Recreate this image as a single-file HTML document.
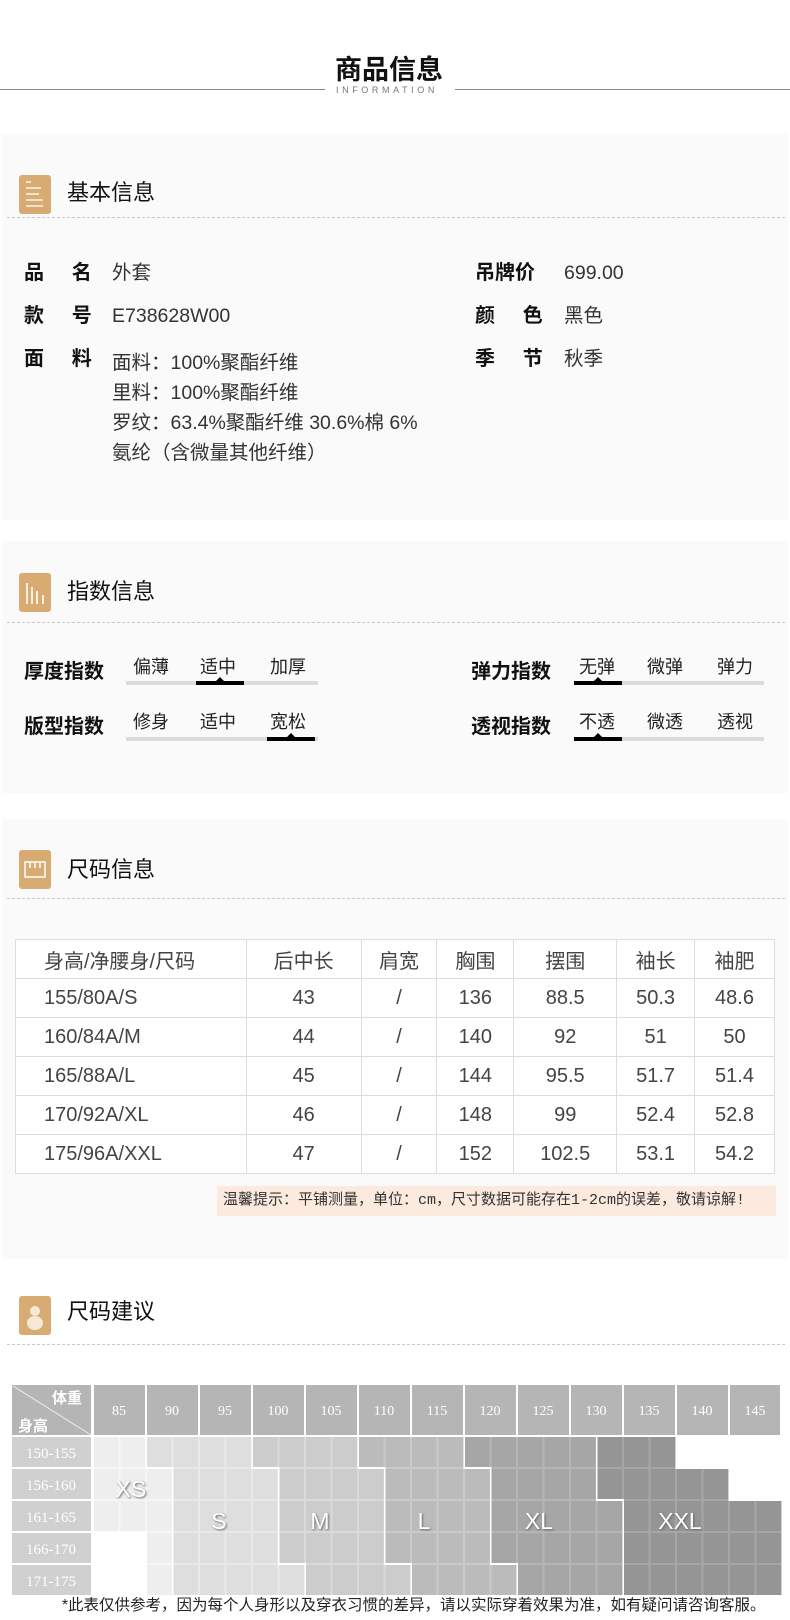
<!DOCTYPE html>
<html><head><meta charset="utf-8"><style>
*{margin:0;padding:0;box-sizing:border-box}
body{width:790px;height:1620px;background:#fff;position:relative;overflow:hidden;font-family:"Liberation Sans","Noto Sans CJK SC",sans-serif;color:#222}
.a{position:absolute;white-space:nowrap}
.panel{position:absolute;left:2px;width:786px;background:#fafafa}
.ic{position:absolute;left:19px;width:32px;height:39px;background:#d8ab72;border-radius:3px}
.st{position:absolute;left:67px;font-size:22px;line-height:26px;color:#111}
.dash{position:absolute;left:7px;width:778px;border-top:1px dashed #c8c8c8}
.lb{font-size:20px;font-weight:bold;color:#111;line-height:22px}
.v{font-size:19.5px;color:#333;line-height:22px}
.op{font-size:18px;color:#222;line-height:22px}
.bar{position:absolute;height:4px;background:#dcdcdc}
.bk{position:absolute;height:4px;background:#000}
.bk:after{content:"";position:absolute;left:50%;top:-4px;margin-left:-4px;border:4px solid transparent;border-top:0;border-bottom:4px solid #000}
table{position:absolute;left:15px;top:939px;width:760px;border-collapse:collapse}
td{border:1px solid #ddd;height:39px;text-align:center;font-size:20px;color:#444;background:#fff}
td:first-child{text-align:left;padding-left:28px}
</style></head><body>
<div class="a" style="left:0;top:89px;width:325px;border-top:1px solid #888"></div>
<div class="a" style="left:455px;top:89px;width:335px;border-top:1px solid #888"></div>
<div class="a" style="left:335px;top:55px;font-size:27px;font-weight:bold;line-height:30px;color:#111">商品信息</div>
<div class="a" style="left:336px;top:85px;font-size:9px;letter-spacing:3.6px;color:#777">INFORMATION</div>

<div class="panel" style="top:134px;height:386px"></div>
<div class="panel" style="top:541px;height:252px"></div>
<div class="panel" style="top:819px;height:440px"></div>

<div class="ic" style="top:175px"><svg width="32" height="39"><g stroke="#fff" stroke-width="1.3"><line x1="7" y1="7" x2="12" y2="7"/><line x1="7" y1="13" x2="22" y2="13"/><line x1="7" y1="19" x2="20" y2="19"/><line x1="7" y1="25" x2="24" y2="25"/><line x1="7" y1="31" x2="24" y2="31"/></g></svg></div>
<div class="st" style="top:180px">基本信息</div>
<div class="dash" style="top:217px"></div>
<div class="a lb" style="left:24px;top:262px">品&nbsp;&nbsp;&nbsp;&nbsp;&nbsp;名</div>
<div class="a v" style="left:112px;top:262px">外套</div>
<div class="a lb" style="left:24px;top:305px">款&nbsp;&nbsp;&nbsp;&nbsp;&nbsp;号</div>
<div class="a v" style="left:112px;top:305px">E738628W00</div>
<div class="a lb" style="left:24px;top:348px">面&nbsp;&nbsp;&nbsp;&nbsp;&nbsp;料</div>
<div class="a v" style="left:112px;top:348px;line-height:30px;white-space:normal;width:360px">面料：100%聚酯纤维<br>里料：100%聚酯纤维<br>罗纹：63.4%聚酯纤维 30.6%棉 6%<br>氨纶（含微量其他纤维）</div>
<div class="a lb" style="left:475px;top:262px">吊牌价</div>
<div class="a v" style="left:564px;top:262px">699.00</div>
<div class="a lb" style="left:475px;top:305px">颜&nbsp;&nbsp;&nbsp;&nbsp;&nbsp;色</div>
<div class="a v" style="left:564px;top:305px">黑色</div>
<div class="a lb" style="left:475px;top:348px">季&nbsp;&nbsp;&nbsp;&nbsp;&nbsp;节</div>
<div class="a v" style="left:564px;top:348px">秋季</div>

<div class="ic" style="top:573px"><svg width="32" height="39"><g stroke="#fbeee0" stroke-width="2"><line x1="8" y1="10" x2="8" y2="31"/><line x1="13" y1="14" x2="13" y2="31"/><line x1="18" y1="18" x2="18" y2="31"/><line x1="24" y1="22" x2="24" y2="31"/></g></svg></div>
<div class="st" style="top:579px">指数信息</div>
<div class="dash" style="top:622px"></div>
<div class="a lb" style="left:24px;top:661px">厚度指数</div>
<div class="a lb" style="left:24px;top:716px">版型指数</div>
<div class="a op" style="left:133px;top:656px">偏薄</div><div class="a op" style="left:200px;top:656px">适中</div><div class="a op" style="left:270px;top:656px">加厚</div>
<div class="bar" style="left:126px;top:681px;width:192px"></div><div class="bk" style="left:196px;top:681px;width:48px"></div>
<div class="a op" style="left:133px;top:711px">修身</div><div class="a op" style="left:200px;top:711px">适中</div><div class="a op" style="left:270px;top:711px">宽松</div>
<div class="bar" style="left:126px;top:737px;width:192px"></div><div class="bk" style="left:267px;top:737px;width:48px"></div>
<div class="a lb" style="left:471px;top:661px">弹力指数</div>
<div class="a lb" style="left:471px;top:716px">透视指数</div>
<div class="a op" style="left:579px;top:656px">无弹</div><div class="a op" style="left:647px;top:656px">微弹</div><div class="a op" style="left:717px;top:656px">弹力</div>
<div class="bar" style="left:574px;top:681px;width:190px"></div><div class="bk" style="left:574px;top:681px;width:48px"></div>
<div class="a op" style="left:579px;top:711px">不透</div><div class="a op" style="left:647px;top:711px">微透</div><div class="a op" style="left:717px;top:711px">透视</div>
<div class="bar" style="left:574px;top:737px;width:190px"></div><div class="bk" style="left:574px;top:737px;width:48px"></div>

<div class="ic" style="top:850px"><svg width="32" height="39"><g stroke="#fff" stroke-width="1.5" fill="none"><rect x="6" y="12" width="20" height="15"/><line x1="11" y1="12" x2="11" y2="18"/><line x1="16" y1="12" x2="16" y2="18"/><line x1="21" y1="12" x2="21" y2="18"/></g></svg></div>
<div class="st" style="top:857px">尺码信息</div>
<div class="dash" style="top:898px"></div>
<table>
<colgroup><col style="width:231px"><col style="width:115px"><col style="width:76px"><col style="width:77px"><col style="width:103px"><col style="width:78px"><col style="width:80px"></colgroup>
<tr><td>身高/净腰身/尺码</td><td>后中长</td><td>肩宽</td><td>胸围</td><td>摆围</td><td>袖长</td><td>袖肥</td></tr>
<tr><td>155/80A/S</td><td>43</td><td>/</td><td>136</td><td>88.5</td><td>50.3</td><td>48.6</td></tr>
<tr><td>160/84A/M</td><td>44</td><td>/</td><td>140</td><td>92</td><td>51</td><td>50</td></tr>
<tr><td>165/88A/L</td><td>45</td><td>/</td><td>144</td><td>95.5</td><td>51.7</td><td>51.4</td></tr>
<tr><td>170/92A/XL</td><td>46</td><td>/</td><td>148</td><td>99</td><td>52.4</td><td>52.8</td></tr>
<tr><td>175/96A/XXL</td><td>47</td><td>/</td><td>152</td><td>102.5</td><td>53.1</td><td>54.2</td></tr>
</table>
<div class="a" style="left:217px;top:1186px;width:559px;height:30px;background:#fbeadd;font-family:'Liberation Mono','Noto Sans CJK SC',monospace;font-size:15px;line-height:30px;color:#333;padding-left:6px">温馨提示：平铺测量，单位：cm，尺寸数据可能存在1-2cm的误差，敬请谅解!</div>

<div class="ic" style="top:1296px"><svg width="32" height="39"><g fill="#f8e8d8"><circle cx="16" cy="15" r="5"/><ellipse cx="16" cy="27" rx="8" ry="7"/></g></svg></div>
<div class="st" style="top:1299px">尺码建议</div>
<div class="dash" style="top:1344px"></div>

<svg class="a" style="left:0;top:1380px" width="790" height="220" font-family="Liberation Serif,serif">
<rect x="12" y="5" width="79" height="50" fill="#b5b5b5"/>
<line x1="13" y1="6" x2="91" y2="55" stroke="#eee" stroke-width="1"/>
<g fill="#fff" font-size="15" font-weight="bold" font-family="Noto Sans CJK SC,sans-serif"><text x="52" y="23">体重</text><text x="18" y="51">身高</text></g>
<g fill="#b5b5b5">
<rect x="94" y="5" width="51" height="50"/><rect x="147" y="5" width="51" height="50"/><rect x="200" y="5" width="51" height="50"/><rect x="253" y="5" width="51" height="50"/><rect x="306" y="5" width="51" height="50"/><rect x="359" y="5" width="51" height="50"/><rect x="412" y="5" width="51" height="50"/><rect x="465" y="5" width="51" height="50"/><rect x="518" y="5" width="51" height="50"/><rect x="571" y="5" width="51" height="50"/><rect x="624" y="5" width="51" height="50"/><rect x="677" y="5" width="51" height="50"/><rect x="730" y="5" width="50" height="50"/>
</g>
<g fill="#fff" font-size="14" text-anchor="middle">
<text x="119" y="35">85</text><text x="172" y="35">90</text><text x="225" y="35">95</text><text x="278" y="35">100</text><text x="331" y="35">105</text><text x="384" y="35">110</text><text x="437" y="35">115</text><text x="490" y="35">120</text><text x="543" y="35">125</text><text x="596" y="35">130</text><text x="649" y="35">135</text><text x="702" y="35">140</text><text x="755" y="35">145</text>
</g>
<g fill="#d0d0d0"><rect x="12" y="57" width="79" height="30"/><rect x="12" y="89" width="79" height="30"/><rect x="12" y="121" width="79" height="30"/><rect x="12" y="153" width="79" height="30"/><rect x="12" y="185" width="79" height="30"/></g>
<g fill="#fff" font-size="15" text-anchor="middle"><text x="51" y="78">150-155</text><text x="51" y="110">156-160</text><text x="51" y="142">161-165</text><text x="51" y="174">166-170</text><text x="51" y="206">171-175</text></g>
<g id="cells"></g>
<g fill="#fff" font-family="Liberation Sans,sans-serif" font-size="23" text-anchor="middle" style="filter:drop-shadow(1px 1px 1px #666)">
<text x="131" y="117">XS</text><text x="219" y="149">S</text><text x="320" y="149">M</text><text x="424" y="149">L</text><text x="539" y="149">XL</text><text x="680" y="149">XXL</text>
</g>
</svg>
<script>
(function(){
var C={X:"#eeeeee",S:"#dedede",M:"#cccccc",L:"#bbbbbb",XL:"#a6a6a6",XXL:"#959595"};
var B={X:"#f6f6f6",S:"#e9e9e9",M:"#dadada",L:"#cacaca",XL:"#b6b6b6",XXL:"#a6a6a6"};
var rows=[
["X","X","S","S","S","S","M","M","M","M","L","L","L","L","XL","XL","XL","XL","XL","XXL","XXL","XXL","","","",""],
["X","X","X","S","S","S","S","M","M","M","M","L","L","L","L","XL","XL","XL","XL","XXL","XXL","XXL","XXL","XXL","",""],
["X","X","X","S","S","S","S","M","M","M","M","L","L","L","L","XL","XL","XL","XL","XL","XXL","XXL","XXL","XXL","XXL","XXL"],
["","","X","S","S","S","S","M","M","M","M","L","L","L","L","XL","XL","XL","XL","XL","XXL","XXL","XXL","XXL","XXL","XXL"],
["","","X","S","S","S","S","S","M","M","M","M","L","L","L","L","XL","XL","XL","XL","XXL","XXL","XXL","XXL","XXL","XXL"]];
var g=document.getElementById("cells"),ns="http://www.w3.org/2000/svg";
function r(x,y,w,h,f){var e=document.createElementNS(ns,"rect");e.setAttribute("x",x);e.setAttribute("y",y);e.setAttribute("width",w);e.setAttribute("height",h);e.setAttribute("fill",f);g.appendChild(e);}
rows.forEach(function(row,i){row.forEach(function(s,h){if(!s)return;
var x=94+26.5*h,y=57+32*i;
var sameR=row[h+1]===s,sameD=rows[i+1]&&rows[i+1][h]===s;
r(x,y,sameR?26.5:25,sameD?32:30,B[s]);
r(x,y,24.5,30,C[s]);});});
})();
</script>
<div class="a" style="left:62px;top:1596px;font-size:15.5px;line-height:20px;color:#222">*此表仅供参考，因为每个人身形以及穿衣习惯的差异，请以实际穿着效果为准，如有疑问请咨询客服。</div>
</body></html>
